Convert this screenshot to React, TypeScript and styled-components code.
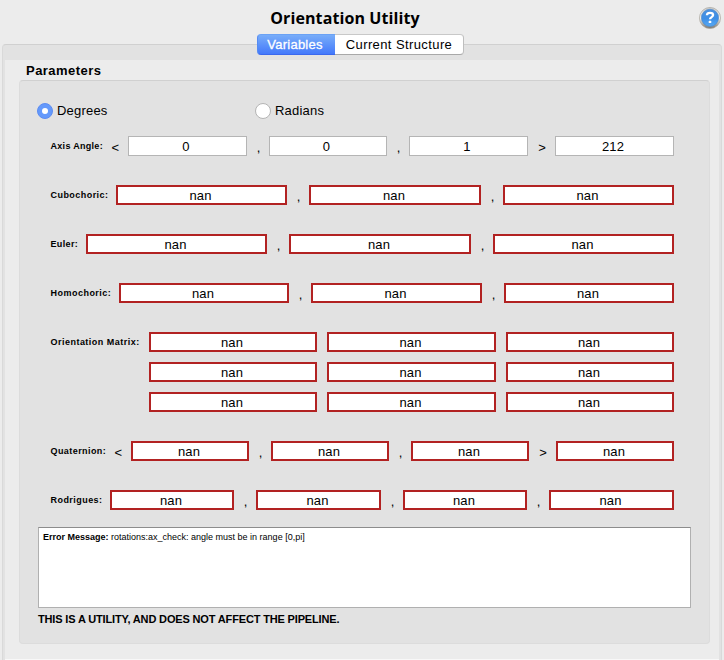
import React from "react";
import styled, { createGlobalStyle } from "styled-components";

const Global = createGlobalStyle`
  * { box-sizing: border-box; }
  body { margin: 0; background: #ececec; color: #000; font-family: "Liberation Sans", Arial, sans-serif; }
`;

const Window = styled.div`
  width: 724px;
  height: 660px;
  background: #ececec;
  overflow: hidden;
`;

const Header = styled.header`
  display: grid;
  grid-template-columns: 1fr 32px;
  height: 34px;
  padding-right: 2px;
`;

const Title = styled.h1`
  margin: 0;
  padding: 7px 0 0 0;
  text-align: center;
  white-space: nowrap;
  font: bold 16px/23px "Open Sans", "Noto Sans", sans-serif;
  letter-spacing: 0.1px;
`;

const HelpButton = styled.button`
  width: 24px;
  height: 24px;
  margin: 6px 0 0 8px;
  padding: 0;
  border: 0;
  background: none;
  svg { display: block; }
`;

const Tabs = styled.div`
  position: relative;
  z-index: 1;
  display: flex;
  width: 207px;
  height: 21px;
  margin: 0 0 -11px 257px;
  border-radius: 4px;
`;

const Tab = styled.button<{ $active?: boolean; $width: number }>`
  width: ${p => p.$width}px;
  height: 21px;
  padding: ${p => (p.$active ? "0 3px 0 0" : "0")};
  border: 1px solid;
  border-color: ${p => (p.$active ? "#6ba2f5 #558bf3 #3a68ee" : "#c8c8c8 #bebebe #a9a9a9 #fff")};
  border-${p => (p.$active ? "right" : "left")}-width: 0;
  border-radius: ${p => (p.$active ? "4px 0 0 4px" : "0 4px 4px 0")};
  background: ${p => (p.$active ? "linear-gradient(#78adf9, #4379fb)" : "#fff")};
  color: ${p => (p.$active ? "#fff" : "#000")};
  -webkit-text-stroke: ${p => (p.$active ? "0.3px #fff" : "0")};
  font: 13px/18px "Liberation Sans", Arial, sans-serif;
  letter-spacing: ${p => (p.$active ? "0.25px" : "0.4px")};
  white-space: nowrap;
`;

const TabFrame = styled.main`
  width: 720px;
  height: 616px;
  margin-left: 2px;
  padding: 15px 2px 0;
  border: solid #d9d9d9;
  border-width: 1px 1px 0;
  border-top-color: #d0d0d0;
  border-radius: 4px 4px 0 0;
  background: #e2e2e2;
`;

const TabPage = styled.div`
  height: 600px;
  padding: 0 9px 0 14px;
  background: #ececec;
  border-bottom: 1px solid #f8f8f8;
`;

const GroupTitle = styled.h2`
  margin: 0 0 0 7px;
  height: 20px;
  padding-top: 2px;
  font-size: 13px;
  line-height: 17px;
  letter-spacing: 0.47px;
`;

const Group = styled.section`
  width: 691px;
  height: 564px;
  padding: 19px 18px 0;
  border: 1px solid #dcdcdc;
  border-top-color: #d0d0d0;
  border-radius: 4px;
  background: #e2e2e2;
`;

const Radios = styled.div`
  display: grid;
  grid-template-columns: 218px 1fr;
  height: 36px;
  margin-left: -1px;
`;

const RadioLabel = styled.label`
  display: flex;
  gap: 4px;
  height: 20px;
  align-items: center;
  font-size: 13px;
  letter-spacing: 0.2px;
`;

const RadioMark = styled.span<{ $on?: boolean }>`
  display: grid;
  place-items: center;
  width: 16px;
  height: 16px;
  margin-top: 2px;
  border-radius: 50%;
  border: 1px solid ${p => (p.$on ? "#5c8cf2" : "#b4b4b4")};
  background: ${p => (p.$on ? "#6499fb" : "#fff")};
  &::after {
    content: "";
    width: 6px;
    height: 6px;
    border-radius: 50%;
    background: #fff;
  }
`;

const Rows = styled.div`
  display: grid;
  row-gap: 29px;
  width: 624px;
  margin-left: 12px;
`;

const Row = styled.div<{ $columns: string }>`
  display: grid;
  grid-template-columns: ${p => p.$columns};
  grid-auto-rows: 20px;
  row-gap: 10px;
`;

const RowLabel = styled.div`
  display: flex;
  justify-content: space-between;
  padding-left: 0.5px;
  font-size: 9px;
  font-weight: bold;
  line-height: 20px;
  white-space: nowrap;
`;

const LabelText = styled.span<{ $spacing: number }>`
  letter-spacing: ${p => p.$spacing}px;
`;

const Bracket = styled.span`
  padding: 1px 9px 0 0;
  font-size: 13px;
  font-weight: normal;
  line-height: 21px;
`;

const Separator = styled.span`
  padding-left: 1px;
  font-size: 13px;
  line-height: 23px;
  text-align: center;
`;

const Field = styled.input<{ $error: boolean }>`
  width: 100%;
  height: 20px;
  padding: ${p => (p.$error ? "1px 2px 0 0" : "1px 3px 0 0")};
  border: ${p => (p.$error ? "2px solid #b22222" : "1px solid #b5b5b5")};
  border-radius: 0;
  outline: none;
  background: #fff;
  color: #000;
  font: 13px/17px "Liberation Sans", Arial, sans-serif;
  letter-spacing: 0.1px;
  text-align: center;
`;

const Message = styled.div`
  width: 653px;
  height: 81px;
  margin-top: 17px;
  padding: 4px 4px;
  border: 1px solid #b0b0b0;
  border-top-color: #8c8c8c;
  background: #fff;
  font-size: 9px;
  line-height: 11px;
`;

const Notice = styled.p`
  margin: 4px 0 0;
  font-size: 11px;
  font-weight: bold;
  line-height: 14px;
  letter-spacing: -0.155px;
`;

type Entry = {
  label: string;
  spacing: number;
  columns: string;
  open?: boolean;
  cells: string[];
  separators: string[];
};

const entries: Entry[] = [
  { label: "Axis Angle:", spacing: 0.3, columns: "78px 119px 22px 118px 22px 119px 27px 119px", open: true, cells: ["0", "0", "1", "212"], separators: [",", ",", ">"] },
  { label: "Cubochoric:", spacing: 0.45, columns: "66px 171px 22px 172px 22px 171px", cells: ["nan", "nan", "nan"], separators: [",", ","] },
  { label: "Euler:", spacing: 0.35, columns: "36px 181px 22px 182px 22px 181px", cells: ["nan", "nan", "nan"], separators: [",", ","] },
  { label: "Homochoric:", spacing: 0.48, columns: "69px 170px 22px 171px 22px 170px", cells: ["nan", "nan", "nan"], separators: [",", ","] },
  { label: "Orientation Matrix:", spacing: 0.48, columns: "99px 168px 10px 169px 10px 168px", cells: Array(9).fill("nan"), separators: ["", "", ""] },
  { label: "Quaternion:", spacing: 0.43, columns: "81px 118px 22px 118px 22px 118px 27px 118px", open: true, cells: ["nan", "nan", "nan", "nan"], separators: [",", ",", ">"] },
  { label: "Rodrigues:", spacing: 0.45, columns: "60px 124px 22px 125px 22px 124px 22px 125px", cells: ["nan", "nan", "nan", "nan"], separators: [",", ",", ","] },
];

function HelpIcon() {
  return (
    <svg width="24" height="24" viewBox="0 0 24 24">
      <defs>
        <linearGradient id="rim" x2="0" y2="1">
          <stop stopColor="#c9c9c9" />
          <stop offset=".5" stopColor="#f3f1ec" />
          <stop offset="1" stopColor="#77736c" />
        </linearGradient>
        <linearGradient id="disc" x2="0" y2="1">
          <stop stopColor="#4b91df" />
          <stop offset=".55" stopColor="#3e8fe6" />
          <stop offset="1" stopColor="#58aaf5" />
        </linearGradient>
      </defs>
      <circle cx="12" cy="12" r="10.6" fill="url(#rim)" stroke="#aaa7a1" strokeWidth=".7" />
      <circle cx="12" cy="11.8" r="8.6" fill="url(#disc)" stroke="#4683c4" strokeWidth=".6" />
      <path d="M8.9 9.2C9 7.4 10.4 6.9 12 6.9s3.1.7 3.1 2.2c0 2-3.1 2-3.1 4.2" fill="none" stroke="#fff" strokeWidth="2.3" />
      <rect x="10.7" y="14.8" width="2.6" height="2.3" rx=".6" fill="#fff" />
    </svg>
  );
}

function EntryRow({ entry }: { entry: Entry }) {
  const perLine = entry.cells.length === 9 ? 3 : entry.cells.length;
  return (
    <Row $columns={entry.columns}>
      {entry.cells.map((value, i) => {
        const column = i % perLine;
        return (
          <React.Fragment key={i}>
            {column === 0 && (
              <RowLabel>
                {i === 0 && <LabelText $spacing={entry.spacing}>{entry.label}</LabelText>}
                {entry.open && <Bracket>&lt;</Bracket>}
              </RowLabel>
            )}
            <Field $error={value === "nan"} defaultValue={value} />
            {column < perLine - 1 && <Separator>{entry.separators[column]}</Separator>}
          </React.Fragment>
        );
      })}
    </Row>
  );
}

export default function App() {
  return (
    <Window>
      <Global />
      <Header>
        <Title>Orientation Utility</Title>
        <HelpButton aria-label="Help"><HelpIcon /></HelpButton>
      </Header>
      <Tabs>
        <Tab $active $width={78}>Variables</Tab>
        <Tab $width={129}>Current Structure</Tab>
      </Tabs>
      <TabFrame>
        <TabPage>
          <GroupTitle>Parameters</GroupTitle>
          <Group>
            <Radios>
              <RadioLabel><RadioMark $on />Degrees</RadioLabel>
              <RadioLabel><RadioMark />Radians</RadioLabel>
            </Radios>
            <Rows>
              {entries.map(entry => <EntryRow key={entry.label} entry={entry} />)}
            </Rows>
            <Message><b>Error Message:</b> rotations:ax_check: angle must be in range [0,pi]</Message>
            <Notice>THIS IS A UTILITY, AND DOES NOT AFFECT THE PIPELINE.</Notice>
          </Group>
        </TabPage>
      </TabFrame>
    </Window>
  );
}
